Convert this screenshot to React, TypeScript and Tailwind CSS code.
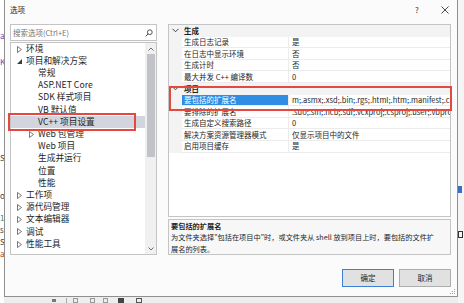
import React from "react";

type TreeItem = { t: string; lvl: number; tri?: "c" | "e"; sel?: boolean };

const tree: TreeItem[] = [
  { t: "环境", lvl: 0, tri: "c" },
  { t: "项目和解决方案", lvl: 0, tri: "e" },
  { t: "常规", lvl: 1 },
  { t: "ASP.NET Core", lvl: 1 },
  { t: "SDK 样式项目", lvl: 1 },
  { t: "VB 默认值", lvl: 1 },
  { t: "VC++ 项目设置", lvl: 1, sel: true },
  { t: "Web 包管理", lvl: 1, tri: "c" },
  { t: "Web 项目", lvl: 1 },
  { t: "生成并运行", lvl: 1 },
  { t: "位置", lvl: 1 },
  { t: "性能", lvl: 1 },
  { t: "工作项", lvl: 0, tri: "c" },
  { t: "源代码管理", lvl: 0, tri: "c" },
  { t: "文本编辑器", lvl: 0, tri: "c" },
  { t: "调试", lvl: 0, tri: "c" },
  { t: "性能工具", lvl: 0, tri: "c" },
];

type GridRow =
  | { kind: "cat"; name: string }
  | { kind: "prop"; name: string; value: string; sel?: boolean };

const grid: GridRow[] = [
  { kind: "cat", name: "生成" },
  { kind: "prop", name: "生成日志记录", value: "是" },
  { kind: "prop", name: "在日志中显示环境", value: "否" },
  { kind: "prop", name: "生成计时", value: "否" },
  { kind: "prop", name: "最大并发 C++ 编译数", value: "0" },
  { kind: "cat", name: "项目" },
  {
    kind: "prop",
    name: "要包括的扩展名",
    value: "m;.asmx;.xsd;.bin;.rgs;.html;.htm;.manifest;.cu;",
    sel: true,
  },
  {
    kind: "prop",
    name: "要排除的扩展名",
    value: ".suo;.sln;.ncb;.sdf;.vcxproj;.csproj;.user;.vbpro",
  },
  { kind: "prop", name: "生成自定义搜索路径", value: "0" },
  { kind: "prop", name: "解决方案资源管理器模式", value: "仅显示项目中的文件" },
  { kind: "prop", name: "启用项目缓存", value: "是" },
];

function Tri({ kind }: { kind: "c" | "e" }) {
  if (kind === "e") {
    return (
      <svg width="5" height="5" viewBox="0 0 5 5">
        <polygon points="5,0 5,5 0,5" fill="#3c3c3c" />
      </svg>
    );
  }
  return (
    <svg width="5" height="7" viewBox="0 0 5 7">
      <polygon points="0.5,0.5 4.5,3.5 0.5,6.5" fill="none" stroke="#6a6a6a" strokeWidth="0.9" />
    </svg>
  );
}

function Chevron() {
  return (
    <svg width="7" height="5" viewBox="0 0 7 5">
      <polyline points="0.5,0.8 3.5,3.8 6.5,0.8" fill="none" stroke="#444" strokeWidth="1" />
    </svg>
  );
}

export default function App() {
  return (
    <div className="w-[464px] h-[303px] overflow-hidden bg-[#f2f2f2] flex font-['Noto_Sans_CJK_SC',sans-serif] text-[#1e1e1e]">
      {/* left background strip (code editor behind) */}
      <div className="w-[4px] h-full bg-white flex flex-col overflow-hidden text-[8px] leading-[8px]">
        <span className="mt-[32px] text-[#5a4fcf]">a</span>
        <span className="mt-[18px] text-[#5a4fcf]">K</span>
        <span className="mt-[88px] text-[#444]">S</span>
        <span className="mt-[30px] text-[#444]">o</span>
        <span className="mt-[14px] text-[#2e8b57]">1</span>
        <span className="mt-[4px] text-[#444]">s</span>
        <span className="mt-[4px] text-[#444]">S</span>
        <span className="mt-[4px] text-[#c0392b]">a</span>
      </div>

      <div className="w-[454px] h-full flex flex-col">
        {/* dialog */}
        <div className="relative h-[297px] bg-[#fbfbfb] border-l border-r border-b border-[#8f8f8f] flex flex-col">
          {/* title bar */}
          <div className="h-[20px] flex items-center pl-[5px] pr-[4px]">
            <span className="text-[7.5px] leading-none">选项</span>
            <div className="flex-1" />
            <div className="w-[16px] h-[16px] flex items-center justify-center text-[8px] text-[#333]">?</div>
            <div className="w-[12px]" />
            <div className="w-[16px] h-[16px] flex items-center justify-center">
              <svg width="8" height="8" viewBox="0 0 8 8">
                <line x1="0.5" y1="0.5" x2="7.5" y2="7.5" stroke="#333" strokeWidth="0.9" />
                <line x1="7.5" y1="0.5" x2="0.5" y2="7.5" stroke="#333" strokeWidth="0.9" />
              </svg>
            </div>
          </div>

          {/* content */}
          <div className="mt-[4px] flex pl-[5px] pr-[6px] gap-[11px]">
            {/* left column */}
            <div className="w-[147px] flex flex-col">
              <div className="h-[17px] border border-[#c4c4c4] bg-white flex items-center pl-[2px] pr-[3px]">
                <span className="text-[7.5px] leading-none text-[#757575] flex-1">搜索选项(Ctrl+E)</span>
                <svg width="8" height="8" viewBox="0 0 8 8">
                  <circle cx="4.8" cy="3.2" r="2.4" fill="none" stroke="#444" strokeWidth="0.9" />
                  <line x1="3.1" y1="4.9" x2="0.6" y2="7.4" stroke="#444" strokeWidth="1" />
                </svg>
              </div>
              <div className="mt-[1px] h-[213px] border border-[#c4c4c4] bg-white flex">
                <div className="flex-1 flex flex-col">
                  {tree.map((it, i) => (
                    <div
                      key={i}
                      className={
                        "h-[12.2px] flex items-center text-[8.7px] leading-none whitespace-nowrap " +
                        (it.sel ? "bg-[#d3d5de]" : "")
                      }
                      style={{ paddingLeft: it.lvl === 0 ? 6 : 18 }}
                    >
                      <div className="w-[9px] flex items-center">{it.tri ? <Tri kind={it.tri} /> : null}</div>
                      <span>{it.t}</span>
                    </div>
                  ))}
                </div>
                <div className="w-[11px] bg-[#f0f0f0] flex flex-col items-center">
                  <div className="h-[11px] flex items-center justify-center">
                    <svg width="6" height="4" viewBox="0 0 6 4">
                      <polyline points="0.5,3.5 3,1 5.5,3.5" fill="none" stroke="#606060" strokeWidth="0.9" />
                    </svg>
                  </div>
                  <div className="w-[8px] h-[103px] bg-[#c2c3c9]" />
                  <div className="flex-1" />
                  <div className="h-[11px] flex items-center justify-center">
                    <svg width="6" height="4" viewBox="0 0 6 4">
                      <polyline points="0.5,0.5 3,3 5.5,0.5" fill="none" stroke="#606060" strokeWidth="0.9" />
                    </svg>
                  </div>
                </div>
              </div>
            </div>

            {/* right column */}
            <div className="w-[283px] flex flex-col">
              <div className="h-[193px] border border-[#c4c4c4] bg-white flex flex-col overflow-hidden">
                {grid.map((r, i) =>
                  r.kind === "cat" ? (
                    <div key={i} className="h-[11.6px] bg-[#f3f3f3] flex items-center">
                      <div className="w-[13px] flex items-center justify-center">
                        <Chevron />
                      </div>
                      <span className="pl-[2px] text-[7.5px] leading-none font-bold">{r.name}</span>
                    </div>
                  ) : (
                    <div key={i} className="h-[11.6px] flex">
                      <div className="w-[13px] bg-[#f3f3f3]" />
                      <div
                        className={
                          "w-[107px] flex items-center pl-[2px] border-b border-r border-[#ececec] text-[7.5px] leading-none whitespace-nowrap overflow-hidden " +
                          (r.sel ? "bg-[#2f8de4] text-white" : "")
                        }
                      >
                        {r.name}
                      </div>
                      <div className="flex-1 min-w-0 flex items-center pl-[3px] border-b border-[#ececec] text-[7.5px] leading-none whitespace-nowrap overflow-hidden">
                        {r.value}
                      </div>
                    </div>
                  )
                )}
              </div>
              <div className="mt-[2px] h-[36px] border border-[#c4c4c4] bg-[#f7f7f7] pl-[2px] pr-[9px] pt-[1px] text-[7.2px] leading-[11.4px] overflow-hidden">
                <div className="font-bold">要包括的扩展名</div>
                <div>为文件夹选择"包括在项目中"时，或文件夹从 shell 放到项目上时，要包括的文件扩展名的列表。</div>
              </div>
            </div>
          </div>

          {/* buttons */}
          <div className="mt-[14px] flex justify-end gap-[5px] pr-[6px]">
            <div className="w-[52px] h-[18px] border border-[#3b80d6] bg-[#e1e1e1] flex items-center justify-center text-[7.5px] leading-none">
              确定
            </div>
            <div className="w-[52px] h-[18px] border border-[#adadad] bg-[#e1e1e1] flex items-center justify-center text-[7.5px] leading-none">
              取消
            </div>
          </div>

          <div className="flex-1 flex items-end justify-end pr-[1px] pb-[1px]">
            <svg width="6" height="6" viewBox="0 0 6 6">
              <rect x="4" y="0" width="1" height="1" fill="#a0a0a0" />
              <rect x="2" y="2" width="1" height="1" fill="#a0a0a0" />
              <rect x="4" y="2" width="1" height="1" fill="#a0a0a0" />
              <rect x="0" y="4" width="1" height="1" fill="#a0a0a0" />
              <rect x="2" y="4" width="1" height="1" fill="#a0a0a0" />
              <rect x="4" y="4" width="1" height="1" fill="#a0a0a0" />
            </svg>
          </div>

          {/* red annotation boxes */}
          <div className="absolute left-[3px] top-[113px] w-[128px] h-[18px] border-2 border-[#e5483f]" />
          <div className="absolute left-[164px] top-[86px] w-[283px] h-[25px] border-2 border-[#e5483f]" />
        </div>

        {/* toolbar strip behind */}
        <div className="flex-1 bg-[#eeeeee] flex items-center">
          <div className="ml-[48px] w-[4px] h-[3px] bg-[#777]" />
          <div className="ml-[10px] w-[1px] h-[5px] bg-[#aaa]" />
          <div className="ml-[6px] w-[5px] h-[5px] border border-[#999]" />
          <div className="ml-[12px] w-[5px] h-[5px] border border-[#999]" />
          <div className="ml-[8px] w-[5px] h-[5px] border border-[#999]" />
          <div className="ml-[10px] w-[6px] h-[5px] bg-[#444]" />
          <div className="ml-[12px] w-[6px] h-[5px] border border-[#555]" />
        </div>
      </div>

      {/* right background strip */}
      <div className="w-[6px] h-full bg-[#f5f5f5] flex flex-col items-start overflow-hidden">
        <div className="mt-[186px] w-[4px] h-[7px] bg-[#3a6fc4]" />
        <div className="mt-[38px] w-[5px] h-[7px] border border-[#333]" />
      </div>
    </div>
  );
}
